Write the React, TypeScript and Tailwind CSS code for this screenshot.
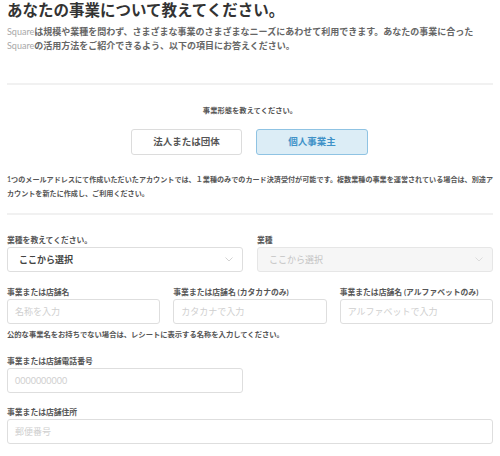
import React from "react";

const font = { fontFamily: 'Lato, "Noto Sans CJK JP", sans-serif' };

function Chevron({ light }: { light?: boolean }) {
  return (
    <svg width="8" height="5" viewBox="0 0 8 5" className="shrink-0">
      <path d="M0.5 0.5 L4 4 L7.5 0.5" fill="none" stroke={light ? "#d6d6d6" : "#c8c8c8"} strokeWidth="0.8" />
    </svg>
  );
}

function Label({ children }: { children: React.ReactNode }) {
  return <div className="mb-[1px] text-[7.8px] font-bold leading-[12px] text-[#555]">{children}</div>;
}

function Input({ placeholder }: { placeholder: string }) {
  return (
    <div className="flex h-[25px] items-center rounded-[3px] border border-[#dedede] bg-white px-[7px] text-[9px] text-[#cfcfcf]">
      {placeholder}
    </div>
  );
}

export default function App() {
  return (
    <div className="h-[456px] w-[500px] overflow-hidden bg-white px-[7px]" style={font}>
      <h1 className="text-[15.5px] font-bold leading-[20px] text-[#333]">あなたの事業について教えてください。</h1>
      <p className="mt-[5px] text-[9px] font-semibold leading-[14px] text-[#666]">
        <span className="font-normal text-[#a8a8a8]">Square</span>は規模や業種を問わず、さまざまな事業のさまざまなニーズにあわせて利用できます。あなたの事業に合った
        <br />
        <span className="font-normal text-[#a8a8a8]">Square</span>の活用方法をご紹介できるよう、以下の項目にお答えください。
      </p>

      <div className="mt-[30px] h-[2px] bg-[#f1f1f1]" />

      <div className="mt-[20px] text-center text-[7.3px] font-semibold leading-[12px] text-[#555]">事業形態を教えてください。</div>
      <div className="mt-[12px] flex justify-center gap-[14px] pr-[1px]">
        <button className="flex h-[26px] w-[111px] items-center justify-center rounded-[3px] border border-[#dcdcdc] bg-white text-[9.5px] font-bold text-[#555]">
          法人または団体
        </button>
        <button className="flex h-[26px] w-[112px] items-center justify-center rounded-[3px] border border-[#8fc3e3] bg-[#dcedf6] text-[9.5px] font-bold text-[#3f92c8]">
          個人事業主
        </button>
      </div>

      <p className="mt-[18px] text-justify text-[7.1px] font-semibold leading-[14px] text-[#555]">
        1つのメールアドレスにて作成いただいたアカウントでは、１業種のみでのカード決済受付が可能です。複数業種の事業を運営されている場合は、別途アカウントを新たに作成し、ご利用ください。
      </p>

      <div className="mt-[12px] h-[2px] bg-[#f1f1f1]" />

      <div className="mt-[19px] grid grid-cols-2 gap-x-[14px]">
        <div>
          <Label>業種を教えてください。</Label>
          <div className="flex h-[25px] items-center justify-between rounded-[3px] border border-[#dedede] bg-white pl-[11px] pr-[9px] text-[9px] font-bold text-[#444]">
            ここから選択
            <Chevron />
          </div>
        </div>
        <div>
          <Label>業種</Label>
          <div className="flex h-[25px] items-center justify-between rounded-[3px] border border-[#e6e6e6] bg-[#f6f6f6] pl-[11px] pr-[9px] text-[9px] text-[#c4c4c4]">
            ここから選択
            <Chevron light />
          </div>
        </div>
      </div>

      <div className="mt-[14px] grid grid-cols-3 gap-x-[13px]">
        <div>
          <Label>事業または店舗名</Label>
          <Input placeholder="名称を入力" />
        </div>
        <div>
          <Label>事業または店舗名 (カタカナのみ)</Label>
          <Input placeholder="カタカナで入力" />
        </div>
        <div>
          <Label>事業または店舗名 (アルファベットのみ)</Label>
          <Input placeholder="アルファベットで入力" />
        </div>
      </div>
      <div className="mt-[5px] text-[7.3px] font-semibold leading-[12px] text-[#555]">
        公的な事業名をお持ちでない場合は、レシートに表示する名称を入力してください。
      </div>

      <div className="mt-[14px] w-[236px]">
        <Label>事業または店舗電話番号</Label>
        <Input placeholder="0000000000" />
      </div>

      <div className="mt-[13px]">
        <Label>事業または店舗住所</Label>
        <Input placeholder="郵便番号" />
      </div>
    </div>
  );
}
